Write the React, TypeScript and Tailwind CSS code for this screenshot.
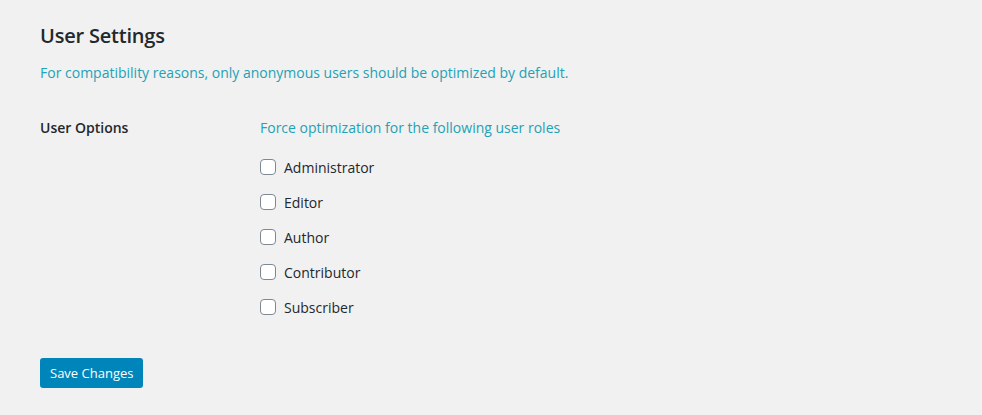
const roles = ["Administrator", "Editor", "Author", "Contributor", "Subscriber"];

export default function App() {
  return (
    <main
      className="min-h-[415px] bg-[#f1f1f1] px-10 pt-[22px] text-[#23282d]"
      style={{ fontFamily: '"Open Sans", "Noto Sans", sans-serif' }}
    >
      <h2 className="text-[20px] font-semibold leading-[28px] tracking-[-0.2px]">User Settings</h2>
      <p className="mt-[13px] text-[14px] leading-[20px] text-[#23a1b6]">
        For compatibility reasons, only anonymous users should be optimized by default.
      </p>

      <div className="mt-[35px] flex">
        <div className="w-[220px] shrink-0 text-[14px] font-semibold leading-[20px]">User Options</div>
        <div>
          <p className="text-[14px] leading-[20px] text-[#23a1b6]">
            Force optimization for the following user roles
          </p>
          <div className="mt-[19px] flex flex-col gap-[15px]">
            {roles.map((role) => (
              <label key={role} className="flex h-[20px] items-center gap-2 text-[14px]">
                <span className="h-4 w-4 rounded-[4px] border border-[#7e8993] bg-white" />
                <span>{role}</span>
              </label>
            ))}
          </div>
        </div>
      </div>

      <button
        type="button"
        className="mt-[41px] h-[30px] rounded-[3px] bg-[#0085ba] px-[10px] text-[13px] leading-[28px] text-white"
      >
        Save Changes
      </button>
    </main>
  );
}
